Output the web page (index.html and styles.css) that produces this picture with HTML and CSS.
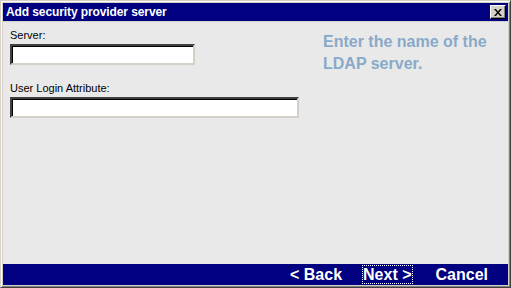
FILE: index.html
```html
<!DOCTYPE html>
<html lang="en">
<head>
    <meta charset="UTF-8">
    <title>Add security provider server</title>
    <link rel="stylesheet" href="styles.css">
</head>
<body>
    <div class="window">
        <div class="titlebar">
            <span class="title">Add security provider server</span>
            <button class="close" aria-label="Close">
                <svg width="8" height="7" viewBox="0 0 8 7">
                    <path d="M0 0h2l2 2.5L6 0h2L5 3.5 8 7H6L4 4.5 2 7H0l3-3.5z" fill="#000"/>
                </svg>
            </button>
        </div>
        <div class="content">
            <div class="form">
                <label class="label" for="server">Server:</label>
                <input class="field short" id="server" type="text">
                <label class="label second" for="login">User Login Attribute:</label>
                <input class="field long" id="login" type="text">
            </div>
            <p class="help">Enter the name of the LDAP server.</p>
        </div>
        <div class="buttons">
            <button class="nav back">&lt; Back</button>
            <button class="nav focus">Next &gt;</button>
            <button class="nav">Cancel</button>
        </div>
    </div>
</body>
</html>
```

FILE: styles.css
```css
body {
    margin: 0;
    font-family: "Liberation Sans", Arial, sans-serif;
}
.window {
    width: 511px;
    height: 288px;
    box-sizing: border-box;
    background-color: #d4d0c8;
    border: 1px solid;
    border-color: #d4d0c8 #404040 #404040 #d4d0c8;
    box-shadow: inset 1px 1px #fff, inset -1px -1px #808080;
    padding: 2px;
    display: flex;
    flex-direction: column;
}
.titlebar {
    height: 18px;
    background-color: #000080;
    display: flex;
    align-items: center;
    justify-content: space-between;
    padding: 0 2px 0 3px;
}
.title {
    color: white;
    font-weight: bold;
    font-size: 12px;
    letter-spacing: -0.1px;
}
.close {
    width: 16px;
    height: 14px;
    padding: 0;
    background-color: #d4d0c8;
    border: 1px solid;
    border-color: #fff #000 #000 #fff;
    box-shadow: inset -1px -1px #808080;
    display: flex;
    align-items: center;
    justify-content: center;
}
.content {
    flex: 1;
    margin-top: 1px;
    background-color: #e9e9e9;
    display: flex;
    padding: 6px 0 0 7px;
}
.form {
    width: 289px;
    display: flex;
    flex-direction: column;
    align-items: flex-start;
}
.label {
    font-size: 11px;
    line-height: 14px;
    color: #000;
    margin-bottom: 2px;
}
.second {
    margin-top: 16px;
}
.field {
    height: 21px;
    box-sizing: border-box;
    background: white;
    border: 2px solid;
    border-color: #404040 #d4d0c8 #d4d0c8 #404040;
    box-shadow: inset 1px 1px #000;
    margin: 0;
    padding: 0 3px;
}
.short {
    width: 185px;
}
.long {
    width: 289px;
}
.help {
    margin: 3px 0 0 24px;
    width: 180px;
    font-size: 16px;
    line-height: 22px;
    font-weight: bold;
    color: #89a9c9;
}
.buttons {
    height: 21px;
    background-color: #000080;
    display: flex;
    justify-content: flex-end;
    align-items: center;
    gap: 22px;
    padding-right: 19px;
}
.nav {
    background: none;
    border: 1px dotted transparent;
    color: white;
    font-family: "Liberation Sans", Arial, sans-serif;
    font-weight: bold;
    font-size: 16px;
    line-height: 17px;
    padding: 0;
}
.back {
    margin-right: -3px;
}
.focus {
    border-color: #fff;
}
```
